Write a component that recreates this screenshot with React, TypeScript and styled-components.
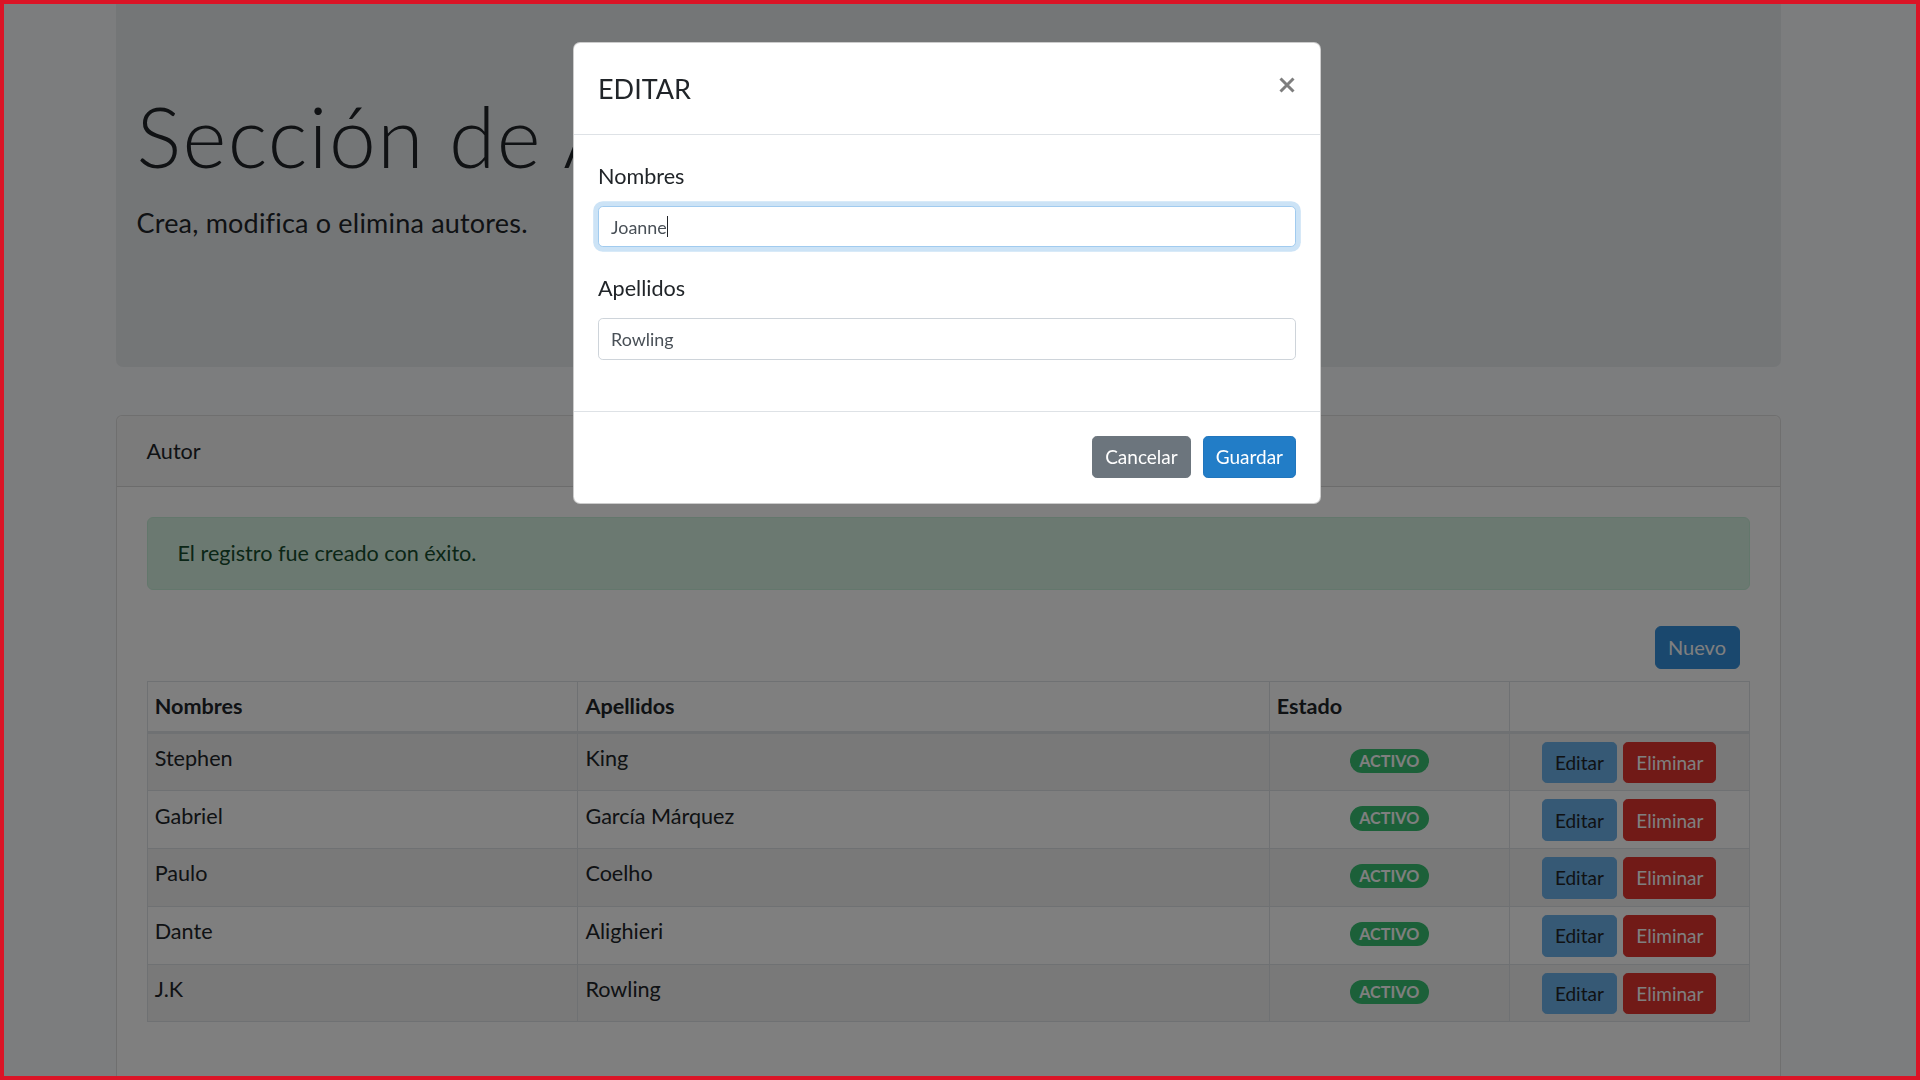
import React from "react";
import styled, { createGlobalStyle, css } from "styled-components";

const GlobalStyle = createGlobalStyle`
  html, body {
    margin: 0;
    padding: 0;
    background: #f8fafc;
    overflow: hidden;
  }
  body {
    font-family: Lato, "Noto Sans", sans-serif;
    color: #212529;
    font-size: 21.6px;
    line-height: 34.56px;
  }
  * { box-sizing: border-box; }
`;

const Page = styled.div`
  width: 1920px;
  height: 1080px;
  padding-right: 24px;
  overflow: hidden;
`;

const Container = styled.div`
  width: 1710px;
  margin: 0 auto;
  padding: 0 22.5px;
`;

const Jumbotron = styled.section`
  background: #e9ecef;
  border-radius: 0 0 7.2px 7.2px;
  padding: 85.8px 21px 98.2px;
  margin-bottom: 48px;
`;

const Display = styled.h1`
  margin: 0 0 14.6px;
  font-size: 84px;
  font-weight: 300;
  letter-spacing: 1.4px;
  line-height: 100.8px;
`;

const Lead = styled.p`
  margin: 0 0 24px;
  font-size: 27px;
  font-weight: 400;
  letter-spacing: 0.2px;
  line-height: 43.2px;
`;

const Card = styled.section`
  background: #fff;
  border: 1.5px solid rgba(0, 0, 0, 0.125);
  border-radius: 6px;
  height: 800px;
`;

const CardHeader = styled.header`
  padding: 18px 30px;
  background: rgba(0, 0, 0, 0.03);
  border-bottom: 1.5px solid rgba(0, 0, 0, 0.125);
  border-radius: 6px 6px 0 0;
`;

const CardBody = styled.div`
  padding: 30px;
`;

const Alert = styled.div`
  padding: 18px 30px;
  background: #d7f3e3;
  border: 1.5px solid #c7eed8;
  color: #164d2e;
  border-radius: 6px;
  margin-bottom: 24px;
`;

const Toolbar = styled.div`
  display: flex;
  justify-content: flex-end;
`;

type Tone = "primary" | "primaryHover" | "secondary" | "info" | "danger";

const tones: Record<Tone, { bg: string; border: string; fg: string }> = {
  primary: { bg: "#3490dc", border: "#3490dc", fg: "#fff" },
  primaryHover: { bg: "#227dc7", border: "#2176bd", fg: "#fff" },
  secondary: { bg: "#6c757d", border: "#6c757d", fg: "#fff" },
  info: { bg: "#6cb2eb", border: "#6cb2eb", fg: "#212529" },
  danger: { bg: "#e3342f", border: "#e3342f", fg: "#fff" },
};

const Button = styled.button<{ $tone: Tone; $big?: boolean }>`
  display: inline-flex;
  align-items: center;
  justify-content: center;
  height: ${(p) => (p.$big ? "43px" : "41.6px")};
  padding: 0 ${(p) => (p.$big ? "12.5px" : "12px")};
  font-family: Lato, "Noto Sans", sans-serif;
  font-size: ${(p) => (p.$big ? "20px" : "19px")};
  line-height: 1;
  border-radius: ${(p) => (p.$big ? "6px" : "4.8px")};
  border: 1.5px solid ${(p) => tones[p.$tone].border};
  background: ${(p) => tones[p.$tone].bg};
  color: ${(p) => tones[p.$tone].fg};
  cursor: pointer;
`;

const NewButton = styled(Button)`
  margin: 12px 10px 12px 0;
`;

const Table = styled.table`
  width: 100%;
  table-layout: fixed;
  border-collapse: collapse;
  border: 1.5px solid #dee2e6;
`;

const Th = styled.th`
  text-align: left;
  font-weight: 700;
  padding: 7.2px;
  vertical-align: bottom;
  border: 1.5px solid #dee2e6;
  border-bottom-width: 3px;
`;

const Row = styled.tr<{ $odd: boolean }>`
  background: ${(p) => (p.$odd ? "rgba(0,0,0,0.05)" : "transparent")};
`;

const Td = styled.td<{ $center?: boolean }>`
  padding: 7.2px;
  vertical-align: top;
  border: 1.5px solid #dee2e6;
  height: 57.5px;
  text-align: ${(p) => (p.$center ? "center" : "left")};
`;

const Badge = styled.span`
  display: inline-block;
  margin-top: 7.8px;
  vertical-align: top;
  padding: 4px 9.7px;
  font-size: 16.2px;
  font-weight: 700;
  line-height: 1;
  color: #fff;
  background: #38c172;
  border-radius: 160px;
`;

const Actions = styled.div`
  display: flex;
  justify-content: center;
  gap: 6.5px;
  margin-top: 0.8px;
`;

const Backdrop = styled.div`
  position: fixed;
  inset: 0;
  background: rgba(0, 0, 0, 0.5);
`;

const ModalLayer = styled.div`
  position: fixed;
  inset: 0;
  padding-right: 26px;
`;

const Dialog = styled.div`
  width: 748px;
  margin: 42px auto 0;
  background: #fff;
  border: 1.5px solid rgba(0, 0, 0, 0.2);
  border-radius: 7.2px;
`;

const ModalHeader = styled.div`
  display: flex;
  align-items: flex-start;
  justify-content: space-between;
  padding: 24px;
  border-bottom: 1.5px solid #dee2e6;
`;

const ModalTitle = styled.h5`
  margin: 0;
  font-size: 27px;
  font-weight: 400;
  line-height: 43.2px;
`;

const CloseButton = styled.button`
  border: 0;
  background: transparent;
  padding: 10px 1px 0 0;
  margin: 0;
  opacity: 0.5;
  cursor: pointer;
  line-height: 0;
`;

const ModalBody = styled.div`
  padding: 24px 24px 27.5px;
`;

const FormGroup = styled.div`
  margin-bottom: 24px;
`;

const Label = styled.label`
  display: block;
  margin-bottom: 12px;
`;

const InputWrap = styled.div`
  position: relative;
`;

const Input = styled.input<{ $focused?: boolean }>`
  display: block;
  width: 100%;
  height: 41.6px;
  padding: 6px 12px;
  font-family: Lato, "Noto Sans", sans-serif;
  font-size: 17.9px;
  line-height: 26.6px;
  color: #495057;
  background: #fff;
  border: 1.5px solid #ced4da;
  border-radius: 4.8px;
  outline: none;
  caret-color: transparent;
  ${(p) =>
    p.$focused &&
    css`
      border-color: #a1cbef;
      box-shadow: 0 0 0 4.8px rgba(52, 144, 220, 0.25);
    `}
`;

const CaretLayer = styled.div`
  position: absolute;
  left: 13.5px;
  top: 7.5px;
  display: flex;
  align-items: center;
  height: 26.6px;
  font-size: 17.9px;
  pointer-events: none;
`;

const Ghost = styled.span`
  color: transparent;
  white-space: pre;
`;

const Caret = styled.span`
  width: 1.3px;
  height: 21px;
  background: #212529;
`;

const ModalFooter = styled.div`
  display: flex;
  justify-content: flex-end;
  align-items: center;
  gap: 12px;
  padding: 24px 24px 25px;
  border-top: 1.5px solid #dee2e6;
`;

const Frame = styled.div`
  position: fixed;
  inset: 0;
  border: 4px solid #db1426;
  pointer-events: none;
`;

const authors = [
  ["Stephen", "King"],
  ["Gabriel", "García Márquez"],
  ["Paulo", "Coelho"],
  ["Dante", "Alighieri"],
  ["J.K", "Rowling"],
];

export default function App() {
  return (
    <>
      <GlobalStyle />
      <Page>
        <Container>
          <Jumbotron>
            <Display>Sección de Autores</Display>
            <Lead>Crea, modifica o elimina autores.</Lead>
          </Jumbotron>
          <Card>
            <CardHeader>Autor</CardHeader>
            <CardBody>
              <Alert>El registro fue creado con éxito.</Alert>
              <Toolbar>
                <NewButton $tone="primary" $big>
                  Nuevo
                </NewButton>
              </Toolbar>
              <Table>
                <colgroup>
                  <col style={{ width: 430.4 }} />
                  <col style={{ width: 690.8 }} />
                  <col style={{ width: 240.1 }} />
                  <col style={{ width: 239.4 }} />
                </colgroup>
                <thead>
                  <tr>
                    <Th>Nombres</Th>
                    <Th>Apellidos</Th>
                    <Th>Estado</Th>
                    <Th></Th>
                  </tr>
                </thead>
                <tbody>
                  {authors.map(([n, a], i) => (
                    <Row key={n} $odd={i % 2 === 0}>
                      <Td>{n}</Td>
                      <Td>{a}</Td>
                      <Td $center>
                        <Badge>ACTIVO</Badge>
                      </Td>
                      <Td>
                        <Actions>
                          <Button $tone="info">Editar</Button>
                          <Button $tone="danger">Eliminar</Button>
                        </Actions>
                      </Td>
                    </Row>
                  ))}
                </tbody>
              </Table>
            </CardBody>
          </Card>
        </Container>
      </Page>
      <Backdrop />
      <ModalLayer>
        <Dialog>
          <ModalHeader>
            <ModalTitle>EDITAR</ModalTitle>
            <CloseButton aria-label="Close">
              <svg width="16" height="16" viewBox="0 0 16 16">
                <path d="M1.5 1.5 L14.5 14.5 M14.5 1.5 L1.5 14.5" stroke="#000" strokeWidth="3" strokeLinecap="butt" />
              </svg>
            </CloseButton>
          </ModalHeader>
          <ModalBody>
            <FormGroup>
              <Label>Nombres</Label>
              <InputWrap>
                <Input $focused defaultValue="Joanne" />
                <CaretLayer aria-hidden="true">
                  <Ghost>Joanne</Ghost>
                  <Caret />
                </CaretLayer>
              </InputWrap>
            </FormGroup>
            <FormGroup>
              <Label>Apellidos</Label>
              <Input defaultValue="Rowling" />
            </FormGroup>
          </ModalBody>
          <ModalFooter>
            <Button $tone="secondary">Cancelar</Button>
            <Button $tone="primaryHover">Guardar</Button>
          </ModalFooter>
        </Dialog>
      </ModalLayer>
      <Frame />
    </>
  );
}
